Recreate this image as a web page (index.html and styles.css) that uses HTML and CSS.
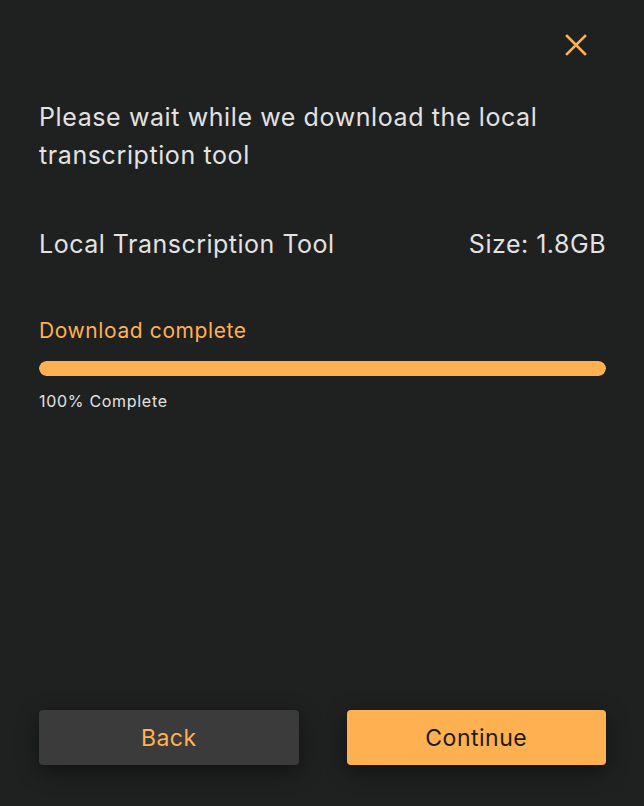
FILE: index.html
```html
<!DOCTYPE html>
<html lang="en">
  <head>
    <meta charset="UTF-8" />
    <title>Download Local Transcription Tool</title>
    <meta name="viewport" content="width=device-width, initial-scale=1" />
    <link rel="stylesheet" href="styles.css">
  </head>
  <body>
    <div class="dialog">
      <div class="dialog-top">
        <button class="close" aria-label="Close">
          <svg width="22" height="22" viewBox="0 0 22 22">
            <path d="M2 2 L20 20 M20 2 L2 20" stroke="#ffb152" stroke-width="2.6" stroke-linecap="square" fill="none" />
          </svg>
        </button>
      </div>

      <h2 class="title">Please wait while we download the local transcription tool</h2>

      <div class="tool-row">
        <span>Local Transcription Tool</span>
        <span>Size: 1.8GB</span>
      </div>

      <div class="status">Download complete</div>
      <div class="progress">
        <div class="progress-fill" style="width: 100%"></div>
      </div>
      <div class="progress-label">100% Complete</div>

      <div class="actions">
        <button class="btn btn-back">Back</button>
        <button class="btn btn-continue">Continue</button>
      </div>
    </div>
  </body>
</html>
```

FILE: styles.css
```css
body {
  font-family: Inter, "Noto Sans", sans-serif;
  margin: 0;
  padding: 0;
  background: #1f2020;
  color: #e2e2e2;
}
.dialog {
  height: 806px;
  box-sizing: border-box;
  padding: 31px 38px 41px 39px;
  display: flex;
  flex-direction: column;
}
.dialog-top {
  display: flex;
  justify-content: flex-end;
  padding-right: 16px;
}
.close {
  background: none;
  border: none;
  padding: 0;
  width: 28px;
  height: 28px;
  display: flex;
  align-items: center;
  justify-content: center;
  cursor: pointer;
}
.title {
  font-size: 25px;
  font-weight: 400;
  letter-spacing: 0.6px;
  line-height: 38px;
  margin: 39px 40px 0 0;
}
.tool-row {
  display: flex;
  justify-content: space-between;
  font-size: 25px;
  letter-spacing: 0.5px;
  line-height: 32px;
  margin-top: 54px;
}
.status {
  color: #ffb152;
  font-size: 21px;
  letter-spacing: 0.6px;
  line-height: 28px;
  margin-top: 57px;
}
.progress {
  height: 15px;
  border-radius: 8px;
  background: #3b3b3b;
  margin-top: 16px;
  overflow: hidden;
}
.progress-fill {
  height: 100%;
  background: #ffb152;
  border-radius: 8px;
}
.progress-label {
  font-size: 16px;
  letter-spacing: 0.7px;
  line-height: 20px;
  margin-top: 15px;
}
.actions {
  margin-top: auto;
  display: flex;
  gap: 48px;
}
.btn {
  flex: 1;
  height: 55px;
  border: none;
  border-radius: 4px;
  font-family: inherit;
  font-size: 23px;
  letter-spacing: 0.5px;
  box-shadow: 0 6px 22px rgba(0, 0, 0, 0.45);
  cursor: pointer;
}
.btn-back {
  background: #3b3b3b;
  color: #ffb152;
}
.btn-continue {
  background: #ffb152;
  color: #1c1c1c;
}
```
